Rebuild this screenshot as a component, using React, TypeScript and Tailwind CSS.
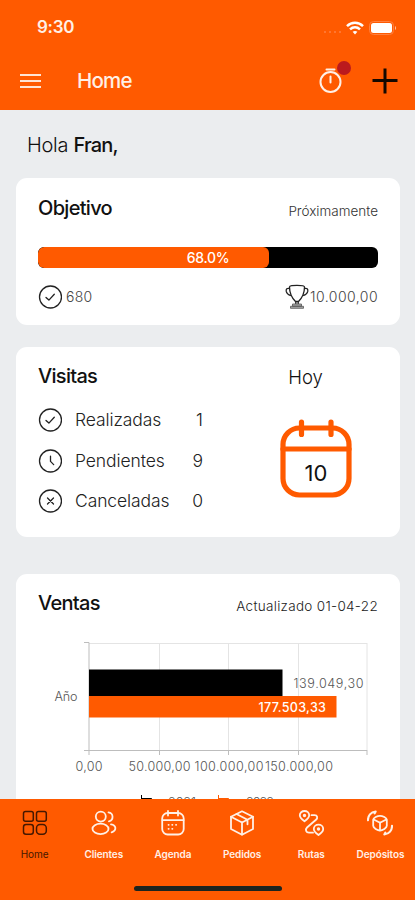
import type { ReactNode } from 'react';
import clsx from 'clsx';

// 訪問ステータスと下部タブのデータ
const VISITS = [
  { id: 'done', label: 'Realizadas', value: 1, mark: 'M8 12.4l2.9 2.7 5.4-5.8' },
  { id: 'pending', label: 'Pendientes', value: 9, mark: 'M12.500 7.2v5.2l3.2 3.2' },
  { id: 'cancelled', label: 'Canceladas', value: 0, mark: 'M9.500 9l6 6M15.500 9l-6 6' },
];

const TICKS = [
  { x: 89, label: '0,00', from: 75.5, width: 27 },
  { x: 159.5, label: '50.000,00', from: 128.5, width: 62 },
  { x: 228.5, label: '100.000,00', from: 194.5, width: 69 },
  { x: 298.5, label: '150.000,00', from: 265, width: 68 },
  { x: 367, label: '', from: 0, width: 0 },
];

function CircleIcon({ mark }: { mark: string }) {
  return (
    <svg viewBox="0 0 24 24" className="size-6 shrink-0" fill="none" stroke="#222" strokeWidth="1.3">
      <circle cx="12.500" cy="12" r="11" />
      <path d={mark} strokeLinecap="round" strokeLinejoin="round" />
    </svg>
  );
}

function TrophyIcon() {
  return (
    <svg viewBox="0 0 24 26" className="h-[26px] w-6 shrink-0" fill="none" stroke="#222" strokeWidth="1.3" strokeLinejoin="round">
      <path d="M4.500 3C4.500 1.700 8 1.300 12 1.300s7.500.4 7.500 1.700c0 6.500-2 10.500-6 14.500h-3c-4-4-6-8-6-14.500z" />
      <path d="M4.600 4.500C2 3.800.9 5 1.200 7.200c.5 2.500 2 3.600 4.700 4.500M19.400 4.500c2.600-.7 3.700.5 3.400 2.700-.5 2.500-2 3.600-4.700 4.500" />
      <path d="M10.800 17.500v2.500M13.200 17.500v2.500" />
      <path d="M7.500 20h9v2.200h-9zM5.500 22.300h13v2h-13z" fill="#aaa" stroke="#555" strokeWidth=".8" />
    </svg>
  );
}

function CalendarIcon() {
  return (
    <svg viewBox="0 0 72 80" className="h-20 w-18" fill="none" stroke="#ff5a00" strokeWidth="5.2" strokeLinecap="round">
      <rect x="3" y="9" width="66" height="67" rx="16.500" />
      <path d="M3 30h66M21.500 3v12.500M51 3v12.500" />
    </svg>
  );
}

function TabIcon({ children }: { children: ReactNode }) {
  return (
    <svg viewBox="0 0 26 26" className="size-[26px]" fill="none" stroke="currentColor" strokeWidth="1.8" strokeLinecap="round" strokeLinejoin="round">
      {children}
    </svg>
  );
}

const TABS = [
  {
    label: 'Home',
    icon: (
      <g strokeWidth="1.5">
        <rect x="1.500" y="1.500" width="9.800" height="9.800" rx="2" />
        <rect x="14.500" y="1.500" width="9.800" height="9.800" rx="2" />
        <rect x="1.500" y="14.500" width="9.800" height="9.800" rx="2.500" />
        <rect x="14.500" y="14.500" width="9.800" height="9.800" rx="3.500" />
      </g>
    ),
  },
  {
    label: 'Clientes',
    icon: (
      <>
        <circle cx="9.800" cy="6.600" r="5" />
        <ellipse cx="9.500" cy="18.900" rx="8" ry="5.200" />
        <path d="M17.500 2.400c5.200.8 5.400 7.700.4 8.900M20 14.300c5.400.8 6 6.200.6 8" />
      </>
    ),
  },
  {
    label: 'Agenda',
    icon: (
      <>
        <rect x="2.200" y="3" width="21.500" height="21.500" rx="5.500" />
        <path d="M2.500 10.200h21M8 1v4.500M18 1v4.500M8.500 14.800h.2M12.200 14.800h.2M16 14.800h.2M8.500 18.800h.2M12.200 18.800h.2" />
      </>
    ),
  },
  {
    label: 'Pedidos',
    icon: (
      <>
        <path d="M13 1.300 24 6.700v12.300L13 24.700 2 19V6.700z" />
        <path d="M2 6.700l11 5.800 11-5.800M13 12.500v12M7.500 4l11 5.800v4.500" />
      </>
    ),
  },
  {
    label: 'Rutas',
    icon: (
      <>
        <path d="M6.500 11.300C3.500 9.200 1.800 7.500 1.800 5.300a4.700 4.300 0 0 1 9.400 0c0 2.200-1.700 3.900-4.700 6zM20.500 25c-3-2.100-4.700-3.800-4.700-6a4.700 4.300 0 0 1 9.400 0c0 2.200-1.700 3.900-4.700 6z" />
        <circle cx="6.500" cy="5.500" r=".8" />
        <circle cx="20.500" cy="19" r=".8" />
        <path d="M13.500 5.200h3c3 0 3.500 2.800 1.500 4.500L9 17.500c-2 2-1 5.200 2 5.200h4" />
      </>
    ),
  },
  {
    label: 'Depósitos',
    icon: (
      <>
        <path d="M13 5.800c2.500 0 6.800 2 6.800 4v6c0 2-4.300 4.700-6.800 4.700S6.200 17.800 6.200 15.800v-6c0-2 4.300-4 6.800-4z" />
        <path d="M6.700 9.500l6.300 3.200 6.300-3.200M13 12.700v7.600" />
        <path d="M1 10.300C.8 5.800 3.800 2 8.700 1.500L7.700 3.300M25 15.700c.2 4.500-2.800 8.300-7.700 8.800l1-1.800" strokeWidth="2.100" />
      </>
    ),
  },
];

function Header() {
  return (
    <header className="flex h-[110px] shrink-0 flex-col bg-[#ff5a00] text-[#fff0e6]">
      <div className="flex h-[53px] items-center justify-between pt-[2px] pr-[18px] pl-[37px]">
        <span className="text-[17px] font-semibold tracking-[-0.3px]">9:30</span>
        <div className="flex items-center">
          <div className="mt-2 mr-[5px] flex gap-[3px]">
            <i className="size-[2px] rounded-full bg-[#ff8040]" />
            <i className="size-[2px] rounded-full bg-[#ff8040]" />
            <i className="size-[2px] rounded-full bg-[#ff8040]" />
            <i className="size-[2px] rounded-full bg-[#ff8040]" />
          </div>
          <svg viewBox="0 0 18 14" className="mr-[5px] h-[14px] w-[18px]" fill="none" stroke="#fff" strokeWidth="2.500">
            <path d="M1 5.200c4.600-4.500 11.400-4.500 16 0M4 8.400c3-2.800 7-2.800 10 0" />
            <path d="M6.600 10.800c1.600-1.200 3.200-1.200 4.800 0L9 13.400z" fill="#fff" stroke="none" />
          </svg>
          <svg viewBox="0 0 28 14" className="h-[14px] w-[28px]">
            <rect x=".5" y=".5" width="24" height="13" rx="4" fill="none" stroke="#ff8040" />
            <rect x="2" y="2" width="21" height="10" rx="2.500" fill="#fff" />
            <path d="M26 5v4c1.300-.6 1.300-3.400 0-4z" fill="#ffc9aa" />
          </svg>
        </div>
      </div>
      <div className="flex h-[55px] items-center pr-[17px] pl-5">
        <svg viewBox="0 0 21 14" className="h-[14px] w-[21px]" stroke="#ffe4d4" strokeWidth="2">
          <path d="M0 1h21M0 7h21M0 13h21" />
        </svg>
        <h1 className="mt-[2px] ml-9 text-[20.500px] font-medium tracking-[-0.8px]">Home</h1>
        <div className="relative ml-auto mr-[30px]">
          <svg viewBox="0 0 24 26" className="mt-[-1px] h-[26px] w-6" fill="none" stroke="currentColor" strokeWidth="2">
            <circle cx="12.500" cy="15" r="10" />
            <path d="M8.500 2.500h8M12.500 9.500v6" strokeLinecap="round" />
          </svg>
          <span className="absolute -top-[7px] left-[19px] size-[14px] rounded-full bg-[#bb1a1d]" />
        </div>
        <svg viewBox="0 0 26 26" className="size-[26px]" stroke="#140800" strokeWidth="3">
          <path d="M13 .5v25M.5 12.500h25" />
        </svg>
      </div>
    </header>
  );
}

function GoalCard() {
  return (
    <section className="h-[147px] rounded-[11px] bg-white pr-[22px] pl-[22px]">
      <div className="flex h-[69px] items-center justify-between">
        <h2 className="mt-[-9px] text-[20px] font-medium tracking-[-0.7px]">Objetivo</h2>
        <span className="mt-[-3px] text-[13.500px] font-light text-[#333]">Próximamente</span>
      </div>
      <div className="relative h-[21px] overflow-hidden rounded-[6px] bg-black">
        <div className="h-full rounded-[6px] bg-[#ff5a00]" style={{ width: '68%' }} />
        <span className="absolute inset-0 text-center text-[14px] leading-[21px] font-medium tracking-[-0.3px] text-white">68.0%</span>
      </div>
      <div className="mt-[16px] flex items-center justify-between text-[14px] font-light text-[#444]">
        <div className="flex items-center gap-1">
          <CircleIcon mark={VISITS[0].mark} />
          <span className="mt-[-1px] tracking-[0.3px]">680</span>
        </div>
        <div className="flex items-center gap-px">
          <TrophyIcon />
          <span className="mt-[-1px] tracking-[0.45px]">10.000,00</span>
        </div>
      </div>
    </section>
  );
}

function VisitsCard() {
  return (
    <section className="mt-[22px] flex h-[190px] rounded-[11px] bg-white pl-[22px]">
      <div className="w-[166px]">
        <h2 className="mt-[15px] mb-[17px] text-[20px] leading-[29px] font-medium tracking-[-0.7px]">Visitas</h2>
        <ul className="flex flex-col gap-[16.5px]">
          {VISITS.map((visit) => (
            <li key={visit.id} className="flex h-6 items-center text-[17.500px] font-light text-[#222]">
              <CircleIcon mark={visit.mark} />
              <span className="mt-px ml-[13px] tracking-[-0.1px]">{visit.label}</span>
              <span className="mt-px mr-px ml-auto">{visit.value}</span>
            </li>
          ))}
        </ul>
      </div>
      <div className="ml-[76px] flex w-[72px] flex-col items-center">
        <h3 className="mt-[16px] mr-[21px] mb-[27px] text-[18.500px] leading-[29px] font-light">Hoy</h3>
        <div className="relative">
          <CalendarIcon />
          <span className="absolute inset-x-0 top-[39px] text-center text-[22px] leading-[30px]">10</span>
        </div>
      </div>
    </section>
  );
}

function SalesChart() {
  return (
    <svg viewBox="16 630 384 180" className="block h-[180px] w-[384px] font-light" fontSize="12.6" fill="#555">
      <path d="M89 643.500h278M159.500 643v107M228.500 643v107M298.500 643v107M367 643v107" stroke="#e4e4e4" fill="none" />
      <path d="M84 642.500h5v107.500M84 750.500h283" stroke="#bdbdbd" fill="none" />
      <rect x="89" y="669.500" width="193.500" height="27" fill="#000" />
      <rect x="89" y="696" width="247.500" height="21.500" fill="#ff5a00" />
      <text x="54.500" y="701" textLength="23">Año</text>
      <text x="293.500" y="687.500" textLength="70">139.049,30</text>
      <text x="258.500" y="711.500" textLength="67.500" fontWeight="500" fill="#fff">177.503,33</text>
      {TICKS.map((tick) => (
        <g key={tick.x}>
          <path d={`M${tick.x} 750v5`} stroke="#bdbdbd" />
          {tick.label && (
            <text x={tick.from} y="770.500" textLength={tick.width}>
              {tick.label}
            </text>
          )}
        </g>
      ))}
      {/* 凡例 (タブバーに隠れる) */}
      <path d="M141.500 795v3.500h10v10h-10z" stroke="#000" fill="#000" />
      <path d="M218.500 795v3.500h10v10h-10z" stroke="#ff5a00" fill="#ff5a00" />
      <text x="168" y="807" textLength="28">2021</text>
      <text x="246" y="807" textLength="28">2022</text>
    </svg>
  );
}

function SalesCard() {
  return (
    <section className="mt-[37px] h-[300px] rounded-[11px] bg-white">
      <div className="flex h-14 items-center justify-between px-[22px]">
        <h2 className="mt-[2px] text-[20px] font-medium tracking-[-0.7px]">Ventas</h2>
        <span className="mt-[9px] text-[13.500px] font-light tracking-[0.3px] text-[#222]">Actualizado 01-04-22</span>
      </div>
      <SalesChart />
    </section>
  );
}

function TabBar() {
  return (
    <nav className="flex h-[101px] shrink-0 flex-col items-center bg-[#ff5a00]">
      <ul className="flex w-full">
        {TABS.map((tab, i) => (
          <li
            key={tab.label}
            className={clsx('flex flex-1 flex-col items-center pt-[11px]', i === 0 ? 'text-[#471800]' : 'text-[#fff0e6]')}
          >
            <TabIcon>{tab.icon}</TabIcon>
            <span className={clsx('mt-[10px] text-[10px] leading-4 tracking-[-0.1px]', i === 0 ? 'font-normal' : 'font-semibold')}>
              {tab.label}
            </span>
          </li>
        ))}
      </ul>
      <div className="mt-[24px] h-[5px] w-[148px] rounded-full bg-[#1c241f]" />
    </nav>
  );
}

export default function App() {
  return (
    <div className="flex h-[900px] w-[415px] flex-col overflow-hidden bg-[#ebedef] font-['Inter','Liberation_Sans',sans-serif] text-[#111]">
      <Header />
      <main className="min-h-0 flex-1 overflow-hidden pr-[15px] pl-4">
        <p className="flex h-[68px] items-center pt-[2px] pl-[11px] text-[20px] font-light tracking-[-0.3px]">
          Hola&nbsp;<span className="font-medium tracking-[-0.8px]">Fran,</span>
        </p>
        <GoalCard />
        <VisitsCard />
        <SalesCard />
      </main>
      <TabBar />
    </div>
  );
}
